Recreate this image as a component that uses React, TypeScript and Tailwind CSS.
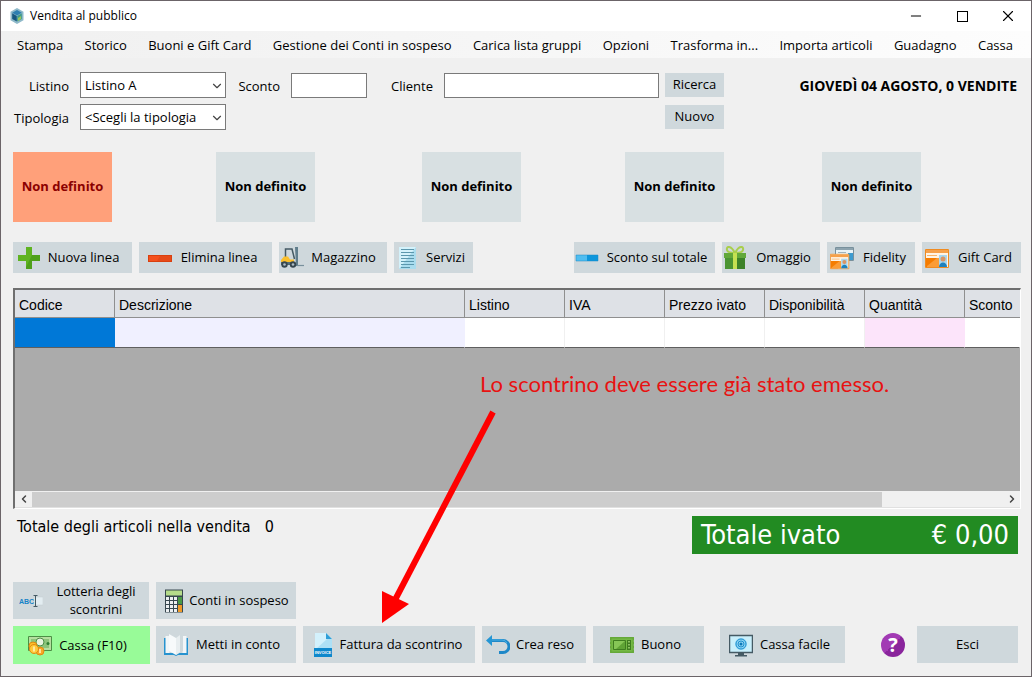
import React, { useState } from 'react';
import { Minus, X, ChevronDown, ChevronLeft, ChevronRight } from 'lucide-react';

const menuItems = [
  'Stampa',
  'Storico',
  'Buoni e Gift Card',
  'Gestione dei Conti in sospeso',
  'Carica lista gruppi',
  'Opzioni',
  'Trasforma in...',
  'Importa articoli',
  'Guadagno',
  'Cassa',
];

const columns = [
  { name: 'Codice', width: 'w-[100px]', cell: 'bg-[#0078d7] border-r-[#0078d7]' },
  { name: 'Descrizione', width: 'w-[350px]', cell: 'bg-[#f0f0ff] border-r-[#f0f0ff]' },
  { name: 'Listino', width: 'w-[100px]', cell: 'bg-white border-r-[#f0f0f0]' },
  { name: 'IVA', width: 'w-[100px]', cell: 'bg-white border-r-[#f0f0f0]' },
  { name: 'Prezzo ivato', width: 'w-[100px]', cell: 'bg-white border-r-[#f0f0f0]' },
  { name: 'Disponibilità', width: 'w-[100px]', cell: 'bg-white border-r-[#f0f0f0]' },
  { name: 'Quantità', width: 'w-[100px]', cell: 'bg-[#fce4fa] border-r-[#fce4fa]' },
  { name: 'Sconto', width: '', cell: 'bg-white border-r-white' },
];

const AppLogo = () => (
  <svg className="w-4 h-4" viewBox="0 0 16 16">
    <path d="M8 0l6.500 3.800v8.400L8 16l-6.500-3.800V3.800z" fill="#8fb9c9" />
    <path d="M8 2l4.800 2.800L8 7.600 3.200 4.800z" fill="#2d7fb0" />
    <path d="M3.200 5.200L7.800 8v5.600L3.200 11z" fill="#15577f" />
    <path d="M12.800 5.200L8.200 8v5.600l4.600-2.600z" fill="#3f9a8a" />
    <path d="M9 10l3-2v3l-3 2z" fill="#9cc55a" />
  </svg>
);

const PlusIcon = () => (
  <svg className="w-6 h-6" viewBox="0 0 24 24">
    <path d="M9 1h6v8h8v6h-8v8H9v-8H1V9h8z" fill="#5fb321" />
    <path d="M15 9h8v6h-8v8H9v-2z" fill="#4fa01a" />
  </svg>
);

const MinusIcon = () => (
  <svg className="w-6 h-6" viewBox="0 0 24 24">
    <path d="M0 9h24v7H0z" fill="#d9400f" />
    <path d="M1 10h22v5H1z" fill="#f4511e" />
    <path d="M12 10h11v5H9z" fill="#e64a19" />
  </svg>
);

const ForkliftIcon = () => (
  <svg className="w-6 h-6" viewBox="0 0 24 24">
    <path d="M5.500 11V3h6.500l2.500 10" fill="none" stroke="#455a64" strokeWidth="1.500" />
    <path d="M15 1h3v19h-2z" fill="#607d8b" />
    <path d="M17 19.500h7" stroke="#78909c" strokeWidth="1.200" />
    <path d="M1 14l3-3.500h4l2 3h4v5H1z" fill="#fbc02d" />
    <path d="M1 16h14v3H1z" fill="#546e7a" />
    <circle cx="4.500" cy="18.500" r="3.200" fill="#37474f" />
    <circle cx="4.500" cy="18.500" r="1.300" fill="#b0bec5" />
    <circle cx="13" cy="18.500" r="3.200" fill="#37474f" />
    <circle cx="13" cy="18.500" r="1.300" fill="#b0bec5" />
  </svg>
);

const DocumentIcon = () => (
  <svg className="w-6 h-6" viewBox="0 0 24 24">
    <path d="M4 1h17v22H4z" fill="#d4f2fb" />
    <path d="M21 1v22H4z" fill="#a9dcee" />
    <path d="M6 3.500h13M6 6.500h13M6 9.500h13M6 12.500h13M6 15.500h13M6 18.500h13M6 21.500h9" stroke="#5b97ad" strokeWidth="1" />
  </svg>
);

const DiscountIcon = () => (
  <svg className="w-6 h-6" viewBox="0 0 24 24">
    <path d="M1 9h22v6H1z" fill="#0d96dc" />
    <path d="M1 9h11v6H1z" fill="#4fbdf0" />
    <path d="M1 9h22v6H1z" fill="none" stroke="#1b8ac6" strokeWidth=".5" />
  </svg>
);

const GiftIcon = () => (
  <svg className="w-6 h-6" viewBox="0 0 24 24">
    <path d="M12 7C8-1 3 0 4 4c.5 2 4 3 8 3zM12 7c4-8 9-7 8-3-.5 2-4 3-8 3z" fill="none" stroke="#a9ce4c" strokeWidth="2" />
    <path d="M1 7h22v5H1z" fill="#62a83a" />
    <path d="M2 12h20v11H2z" fill="#4b9432" />
    <path d="M12 12h10v11H12z" fill="#3d8228" />
    <path d="M10 7h4v16h-4z" fill="#c5e151" />
  </svg>
);

const CardShape = () => (
  <>
    <path d="M.5 3.500h23v18H.5z" fill="#fff4e6" stroke="#ef8b21" />
    <path d="M1 4h22v3H1z" fill="#f6a04a" />
    <path d="M1 21v-9h12l-3 9z" fill="#f57c00" />
    <path d="M2 9.500h10" stroke="#f9b56b" strokeWidth="1" />
    <path d="M2 20l10-8h2v9H2z" fill="#fb9c35" />
    <path d="M14 9h8v12h-8z" fill="#a9d6ee" />
    <circle cx="18" cy="13" r="2.500" fill="#d99565" />
    <path d="M14 21c0-6 8-6 8 0z" fill="#1e81bd" />
  </>
);

const GiftCardIcon = () => (
  <svg className="w-6 h-6" viewBox="0 0 24 24">
    <CardShape />
  </svg>
);

const FidelityIcon = () => (
  <svg className="w-6 h-6" viewBox="0 0 24 24">
    <path d="M5.500 1.500h18v13h-18z" fill="#e9f3f7" stroke="#78909c" />
    <path d="M6 2h17v2H6z" fill="#8da3ae" />
    <path d="M8 6.500h8" stroke="#9fb4be" />
    <path d="M18 7h5v7h-5z" fill="#3c9bd0" />
    <g transform="translate(0 5.500) scale(.8)">
      <CardShape />
    </g>
  </svg>
);

const AbcIcon = () => (
  <svg className="w-6 h-6" viewBox="0 0 24 24">
    <path d="M15 8h9v8h-9z" fill="#e3edf1" stroke="#c0cdd3" strokeWidth=".5" />
    <text x="0" y="15" fontSize="7" fontWeight="900" fill="#1683c7" fontFamily="Liberation Sans, sans-serif">ABC</text>
    <path d="M14.500 6.500h4M14.500 17.500h4M16.500 6.500v11" stroke="#455a64" strokeWidth="1" fill="none" />
  </svg>
);

const CalculatorIcon = () => (
  <svg className="w-6 h-6" viewBox="0 0 24 24">
    <path d="M3 .5h18v23H3z" fill="#37474f" />
    <path d="M4 1.500h16v5H4z" fill="#b5dc8a" />
    <path d="M4 8h3v3H4zM8 8h3v3H8zM12 8h3v3h-3zM4 12h3v3H4zM8 12h3v3H8zM12 12h3v3h-3zM4 16h3v3H4zM8 16h3v3H8zM12 16h3v3h-3zM4 20h3v3H4zM8 20h3v3H8zM12 20h3v3h-3z" fill="#eceff1" />
    <path d="M16 8h4v7h-4z" fill="#4a9a45" />
    <path d="M16 16h4v7h-4z" fill="#f09a28" />
  </svg>
);

const MoneyIcon = () => (
  <svg className="w-6 h-6" viewBox="0 0 24 24">
    <path d="M.5 3.500h23v14H.5z" fill="#b6dfa0" stroke="#4c8f45" />
    <path d="M3 6h18v9H3z" fill="#8cc57b" />
    <circle cx="12" cy="9" r="4" fill="#e7f4df" stroke="#4c8f45" />
    <circle cx="20" cy="10.500" r="1.500" fill="#2e7d32" />
    <circle cx="5" cy="13" r="4" fill="#fbc02d" stroke="#e08a12" />
    <circle cx="12" cy="18" r="4" fill="#f9a825" stroke="#e08a12" />
    <circle cx="6" cy="16" r="4.500" fill="#ffca3a" stroke="#e08a12" />
    <path d="M6 13.500v5M12 16v4" stroke="#fff3c4" strokeWidth="1.500" />
  </svg>
);

const BookIcon = () => (
  <svg className="w-6 h-6" viewBox="0 0 24 24">
    <path d="M0 5h3v15h18V5h3v17H14l-2 1-2-1H0z" fill="#2793cf" />
    <path d="M1.500 3h4v17h-4zM18.500 3h4v17h-4z" fill="#f2f6f8" />
    <path d="M12 5L5 1v17l7 4z" fill="#f7fafb" />
    <path d="M12 5l7-4v17l-7 4z" fill="#ced8dc" />
    <path d="M12 5l4-3v17l-4 3z" fill="#e8eef0" />
  </svg>
);

const InvoiceIcon = () => (
  <svg className="w-6 h-6" viewBox="0 0 24 24">
    <path d="M4 0h11l6 6v10H4z" fill="#d3f1fc" />
    <path d="M21 6v10H5L16 6z" fill="#aee0f5" />
    <path d="M15 0l6 6h-6z" fill="#2f9fd8" />
    <path d="M3 15h18v9H3z" fill="#0f88cc" />
    <text x="12" y="20.500" fontSize="4" fontWeight="700" textAnchor="middle" fill="#fff" fontFamily="Liberation Sans, sans-serif">INVOICE</text>
  </svg>
);

const ReturnIcon = () => (
  <svg className="w-6 h-6" viewBox="0 0 24 24">
    <path d="M5 7.500h12a5.500 5.500 0 0 1 0 12h-4" fill="none" stroke="#1e88c8" strokeWidth="3" />
    <path d="M5 7h11a5.500 5.500 0 0 1 5 3" fill="none" stroke="#4bb2e6" strokeWidth="1" />
    <path d="M0 7.500L6 2v11z" fill="#2496d4" />
  </svg>
);

const VoucherIcon = () => (
  <svg className="w-6 h-6" viewBox="0 0 24 24">
    <path d="M0 4h24v3l-.5 1 .5 1v2l-.5 1 .5 1v2l-.5 1 .5 1v3H0v-3l.5-1-.5-1v-2l.5-1-.5-1V9l.5-1L0 7z" fill="#6aae3c" />
    <path d="M1 5h22v14H1z" fill="#74b944" stroke="#5a9a30" strokeWidth=".5" />
    <path d="M3.500 7.500h12v9h-12z" fill="#86c656" stroke="#3f7d20" />
    <path d="M15 8v8H6z" fill="#5fa335" />
    <path d="M17 7h4v10h-4z" fill="#3f7d20" />
    <path d="M19 8v8" stroke="#a8d979" strokeWidth="1.500" strokeDasharray="1.500 1.500" />
  </svg>
);

const MonitorIcon = () => (
  <svg className="w-6 h-6" viewBox="0 0 24 24">
    <path d="M.5 2.500h23v17H.5z" fill="#c9effb" stroke="#455a64" strokeWidth="1.500" />
    <circle cx="12" cy="11" r="6" fill="#8fd6f5" />
    <circle cx="12" cy="11" r="5" fill="none" stroke="#1e8fce" />
    <circle cx="12" cy="11" r="3" fill="none" stroke="#1e8fce" />
    <circle cx="12" cy="11" r="1.500" fill="#0d79b8" />
    <path d="M9 20h6v2h3v1.500H6V22h3z" fill="#455a64" />
  </svg>
);

interface ToolButtonProps {
  label: string;
  icon?: React.ReactNode;
  className: string;
}

const ToolButton: React.FC<ToolButtonProps> = ({ label, icon, className }) => (
  <button type="button" className={`flex items-center shrink-0 text-[13px] leading-[18px] hover:brightness-95 ${className}`}>
    {icon && <span className="shrink-0">{icon}</span>}
    <span className="flex-1 pb-px text-center">{label}</span>
  </button>
);

interface SelectProps {
  id: string;
  options: string[];
}

const Select: React.FC<SelectProps> = ({ id, options }) => (
  <div className="relative">
    <select id={id} className="appearance-none w-full h-[26px] pl-1 pr-5 border border-[#7a7a7a] bg-white text-[13px] leading-5">
      {options.map((option) => (
        <option key={option}>{option}</option>
      ))}
    </select>
    <ChevronDown className="absolute right-0.5 top-[7px] w-3.5 h-3.5 text-[#444] pointer-events-none" strokeWidth={2} />
  </div>
);

const App: React.FC = () => {
  const [active, setActive] = useState(0);

  return (
    <div className="relative min-h-screen flex flex-col bg-[#f0f0f0] border border-[#6b6468] font-['Open_Sans','Noto_Sans',sans-serif] text-black">
      <header className="flex items-center h-[30px] pl-2 bg-white">
        <AppLogo />
        <h1 className="flex-1 pl-[5px] text-xs">Vendita al pubblico</h1>
        <button type="button" aria-label="Riduci" className="w-[46px] h-full flex items-center justify-center">
          <Minus className="w-4 h-4" strokeWidth={1.5} />
        </button>
        <button type="button" aria-label="Ingrandisci" className="w-[46px] h-full flex items-center justify-center">
          <span className="w-[11px] h-[11px] border border-black" />
        </button>
        <button type="button" aria-label="Chiudi" className="w-[46px] h-full flex items-center justify-center">
          <X className="w-[18px] h-[18px]" strokeWidth={1.5} />
        </button>
      </header>

      <nav className="flex items-center justify-between h-[27px] pt-0.5 pl-4 pr-[18px] bg-linear-to-r from-[#f0f0f0] to-[#fdfdfd] text-[13px] whitespace-nowrap">
        {menuItems.map((item) => (
          <button key={item} type="button" className="hover:underline">{item}</button>
        ))}
      </nav>

      <main className="flex-1 flex flex-col pl-3 pr-2.5 pb-3">
        <form className="grid grid-cols-[67px_146px_65px_76px_77px_215px_65px_1fr] gap-y-1.5 pt-3.5 text-[13px]">
          <label htmlFor="listino" className="pr-[11px] pt-[5px] text-right">Listino</label>
          <Select id="listino" options={['Listino A', 'Listino B']} />
          <label htmlFor="sconto" className="pr-[11px] pt-[5px] text-right">Sconto</label>
          <input id="sconto" type="text" className="w-full h-[25px] mt-px px-1 border border-[#7a7a7a] bg-white" />
          <label htmlFor="cliente" className="pr-[11px] pt-[5px] text-right">Cliente</label>
          <input id="cliente" type="text" className="w-full h-[25px] mt-px px-1 border border-[#7a7a7a] bg-white" />
          <button type="button" className="ml-1.5 mt-px h-6 bg-[#cfd8dc]">Ricerca</button>
          <p className="pt-1 pr-1 text-right text-sm font-bold whitespace-nowrap">GIOVEDÌ 04 AGOSTO, 0 VENDITE</p>

          <label htmlFor="tipologia" className="pr-[11px] pt-[5px] text-right">Tipologia</label>
          <Select id="tipologia" options={['<Scegli la tipologia']} />
          <button type="button" className="col-start-7 ml-1.5 mt-px h-6 bg-[#cfd8dc]">Nuovo</button>
        </form>

        <div className="grid grid-cols-[203fr_206fr_203fr_197fr_196fr] pt-[22px] pr-[3px]">
          {[0, 1, 2, 3, 4].map((slot) => (
            <button
              key={slot}
              type="button"
              onClick={() => setActive(slot)}
              className={`w-[99px] h-[70px] text-[13px] font-bold ${slot === active ? 'bg-[#ffa07a] text-[#8b0000]' : 'bg-[#d8e0e2]'}`}
            >
              Non definito
            </button>
          ))}
        </div>

        <div className="flex gap-[7px] pt-5 pb-[15px]">
          <ToolButton label="Nuova linea" icon={<PlusIcon />} className="w-[119px] h-[31px] pl-1 pr-1.5 bg-[#cfd8dc]" />
          <ToolButton label="Elimina linea" icon={<MinusIcon />} className="w-[133px] h-[31px] pl-[9px] pr-1.5 bg-[#cfd8dc]" />
          <ToolButton label="Magazzino" icon={<ForkliftIcon />} className="w-[108px] h-[31px] pl-px pr-1 bg-[#cfd8dc]" />
          <ToolButton label="Servizi" icon={<DocumentIcon />} className="w-[79px] h-[31px] px-px bg-[#cfd8dc]" />
          <div className="flex-1" />
          <ToolButton label="Sconto sul totale" icon={<DiscountIcon />} className="w-[141px] h-[31px] pl-px bg-[#cfd8dc]" />
          <ToolButton label="Omaggio" icon={<GiftIcon />} className="w-[98px] h-[31px] pl-px bg-[#cfd8dc]" />
          <ToolButton label="Fidelity" icon={<FidelityIcon />} className="w-[88px] h-[31px] pl-[3px] bg-[#cfd8dc]" />
          <ToolButton label="Gift Card" icon={<GiftCardIcon />} className="w-[99px] h-[31px] pl-[3px] bg-[#cfd8dc]" />
        </div>

        <section className="flex-1 flex flex-col bg-[#ababab] border-t-2 border-l-2 border-r border-b border-t-[#6f6f6f] border-l-[#6f6f6f] border-r-white border-b-white">
          <table className="w-full table-fixed border-separate border-spacing-0 font-['Liberation_Sans',Arial,sans-serif] text-sm">
            <thead>
              <tr className="bg-[#dee1e6]">
                {columns.map((col) => (
                  <th key={col.name} className={`${col.width} h-7 p-0 pt-0.5 pl-1 text-left font-normal whitespace-nowrap border-b border-r last:border-r-0 border-[#8f8f8f]`}>
                    {col.name}
                  </th>
                ))}
              </tr>
            </thead>
            <tbody>
              <tr>
                {columns.map((col) => (
                  <td key={col.name} className={`h-[30px] p-0 border-b border-b-[#5f5f5f] border-r ${col.cell}`} />
                ))}
              </tr>
            </tbody>
          </table>
          <p className="flex-1 pt-5 pl-[465px] font-[Lato,sans-serif] text-[22px] leading-8 text-[#e81212] whitespace-nowrap">
            Lo scontrino deve essere già stato emesso.
          </p>
          <div className="flex h-[17px] bg-[#f0f0f0] border-b border-[#e0e0e0]">
            <button type="button" aria-label="Scorri a sinistra" className="w-[17px] flex items-center justify-center">
              <ChevronLeft className="w-3 h-3 text-[#444]" strokeWidth={3} />
            </button>
            <div className="flex-1 pr-[12%]">
              <div className="h-[15px] mt-px bg-[#cdcdcd]" />
            </div>
            <button type="button" aria-label="Scorri a destra" className="w-[17px] flex items-center justify-center">
              <ChevronRight className="w-3 h-3 text-[#444]" strokeWidth={3} />
            </button>
          </div>
        </section>

        <div className="flex justify-between items-start pt-[7px] pl-1 pr-[3px] font-['DejaVu_Sans_Condensed','Noto_Sans',sans-serif]">
          <p className="flex gap-3.5 text-base leading-[22px]">
            <span>Totale degli articoli nella vendita</span>
            <span>0</span>
          </p>
          <p className="w-[326px] h-[38px] px-[9px] flex items-center justify-between bg-[#228b22] text-white text-[27px]">
            <span>Totale ivato</span>
            <span>€ 0,00</span>
          </p>
        </div>

        <div className="flex gap-[7px] pt-7">
          <ToolButton label="Lotteria degli scontrini" icon={<AbcIcon />} className="w-[136px] h-[37px] pl-1.5 bg-[#cfd8dc]" />
          <ToolButton label="Conti in sospeso" icon={<CalculatorIcon />} className="w-[140px] h-[37px] pl-1.5 pr-1 bg-[#cfd8dc]" />
        </div>

        <div className="flex items-start pt-[7px] pr-[3px]">
          <ToolButton label="Cassa (F10)" icon={<MoneyIcon />} className="w-[137px] h-[38px] pl-[15px] pr-4 mr-1.5 bg-[#98fb98]" />
          <ToolButton label="Metti in conto" icon={<BookIcon />} className="w-[140px] h-[37px] pl-2 pr-2 mr-[7px] bg-[#cfd8dc]" />
          <ToolButton label="Fattura da scontrino" icon={<InvoiceIcon />} className="w-[172px] h-[37px] pl-2 pr-2 mr-[7px] bg-[#cfd8dc]" />
          <ToolButton label="Crea reso" icon={<ReturnIcon />} className="w-[104px] h-[37px] pl-1 pr-1.5 mr-[7px] bg-[#cfd8dc]" />
          <ToolButton label="Buono" icon={<VoucherIcon />} className="w-[111px] h-[37px] pl-[17px] pr-4 bg-[#cfd8dc]" />
          <ToolButton label="Cassa facile" icon={<MonitorIcon />} className="w-[125px] h-[37px] pl-[9px] pr-2 ml-4 bg-[#cfd8dc]" />
          <div className="flex-1" />
          <button type="button" aria-label="Aiuto" className="self-center w-6 h-6 mr-3 rounded-full bg-linear-135 from-[#a23ab4] from-50% to-[#8a259c] to-50% text-white text-xl leading-6 font-bold">
            ?
          </button>
          <ToolButton label="Esci" className="w-[101px] h-[37px] bg-[#cfd8dc]" />
        </div>
      </main>

      {/* arrow from the note down to "Fattura da scontrino" */}
      <svg className="absolute left-[380px] bottom-[52px] w-[120px] h-[214px] pointer-events-none" viewBox="0 0 120 214">
        <path d="M112 2L14 190" stroke="#ff0000" strokeWidth="6" />
        <path d="M1 213V181l27 13z" fill="#ff0000" />
      </svg>
    </div>
  );
};

export default App;
